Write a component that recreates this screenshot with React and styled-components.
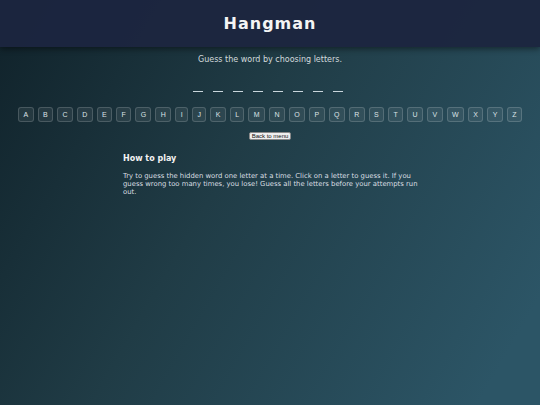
import styled, { createGlobalStyle } from "styled-components";

const GlobalStyle = createGlobalStyle`
    html, body {
        margin:0;
        padding:0;
        height:100%;
    }
    body {
        font-family:"DejaVu Sans", Verdana, sans-serif;
        background:linear-gradient(120deg, #10222a 0%, #203c46 42%, #2c5566 92%);
        background-attachment:fixed;
        color:#d6dde0;
    }
    #root {
        min-height:100vh;
    }
`;

const Header = styled.header`
    height:47px;
    display:flex;
    align-items:center;
    justify-content:center;
    background:rgba(28, 37, 64, 0.96);
    box-shadow:0 2px 6px rgba(0, 0, 0, 0.45);
    position:relative;
    z-index:1;

    h1{
        margin:0;
        font-size:16px;
        font-weight:bold;
        letter-spacing:1px;
        color:#f4f4f4;
    }
`;

const Main = styled.main`
    display:flex;
    flex-direction:column;
    align-items:center;
    padding-top:8px;
`;

const Subtitle = styled.p`
    margin:0;
    font-size:8px;
    color:#d3dadd;
`;

const Word = styled.div`
    display:flex;
    gap:10px;
    margin-top:16px;
    padding-right:4px;
`;

const Slot = styled.span`
    width:10px;
    height:11px;
    border-bottom:1px solid #c9d6dc;
    font-family:"Liberation Sans", Arial, sans-serif;
    font-size:9px;
    text-align:center;
    color:#e8eef0;
`;

const Keyboard = styled.div`
    display:flex;
    flex-wrap:wrap;
    justify-content:center;
    gap:4px;
    margin-top:15px;
`;

const LetterButton = styled.button`
    font-family:"Liberation Sans", Arial, sans-serif;
    font-size:7px;
    line-height:normal;
    padding:3px 4.4px;
    border:1px solid rgba(255, 255, 255, 0.16);
    border-radius:3px;
    background:rgba(255, 255, 255, 0.07);
    color:#dce2e6;
    cursor:pointer;
    &:disabled{
        opacity:0.4;
    }
`;

const BackButton = styled.button`
    margin-top:10px;
    font-family:"Liberation Sans", Arial, sans-serif;
    font-size:6px;
    line-height:normal;
    padding:0 2px;
    border:1px solid #8a8a8a;
    border-radius:2px;
    background:#efefef;
    color:#111;
`;

const HowTo = styled.section`
    width:298px;
    margin-top:14px;
    padding-left:4px;

    h3{
        margin:0;
        font-size:8px;
        font-weight:bold;
        color:#f2f2f2;
    }

    p{
        margin:8.5px 0 0;
        font-size:6.85px;
        line-height:8.2px;
        color:#d9dfe2;
    }
`;

const LETTERS = "ABCDEFGHIJKLMNOPQRSTUVWXYZ".split("");
const WORD_LENGTH = 8;

export default function App() {
    return (
        <>
            <GlobalStyle />
            <Header>
                <h1>Hangman</h1>
            </Header>
            <Main>
                <Subtitle>Guess the word by choosing letters.</Subtitle>
                <Word>
                    {Array.from({ length: WORD_LENGTH }, (_, i) => (
                        <Slot key={i} />
                    ))}
                </Word>
                <Keyboard>
                    {LETTERS.map(letter => (
                        <LetterButton key={letter}>{letter}</LetterButton>
                    ))}
                </Keyboard>
                <BackButton>Back to menu</BackButton>
                <HowTo>
                    <h3>How to play</h3>
                    <p>
                        Try to guess the hidden word one letter at a time. Click on a letter to guess it. If you guess wrong too many times, you lose! Guess all the letters before your attempts run out.
                    </p>
                </HowTo>
            </Main>
        </>
    );
}
